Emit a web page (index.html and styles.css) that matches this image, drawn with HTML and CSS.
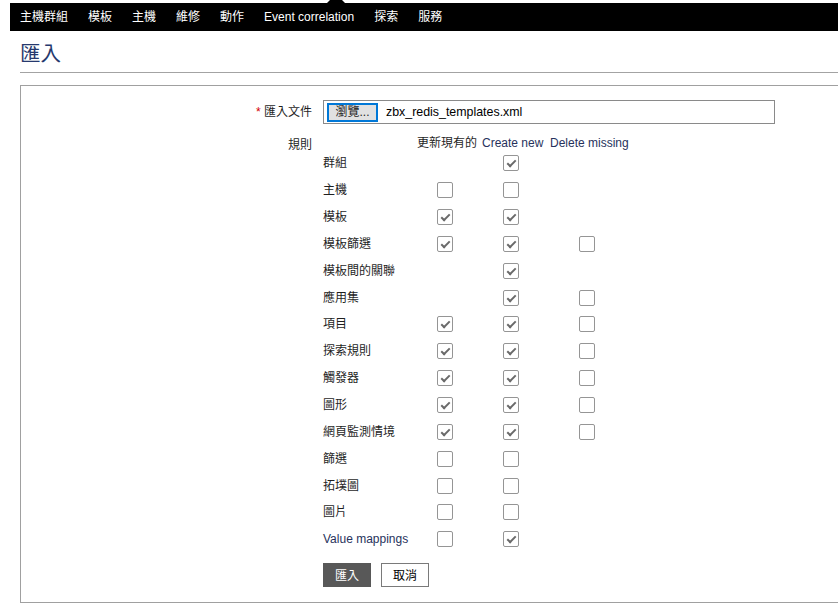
FILE: index.html
```html
<!DOCTYPE html>
<html>
<head>
	<meta charset="UTF-8">
	<title>匯入</title>
	<link rel="stylesheet" href="styles.css">
</head>
<body>
<ul class="top-nav">
	<li>主機群組</li>
	<li>模板</li>
	<li>主機</li>
	<li>維修</li>
	<li>動作</li>
	<li>Event correlation</li>
	<li>探索</li>
	<li>服務</li>
</ul>

<div class="page">
	<h1 class="page-title">匯入</h1>

	<form class="import-form">
		<div class="form-list">
			<label class="form-label"><span class="req">*</span> 匯入文件</label>
			<div class="file-input"><span class="browse">瀏覽...</span><span class="file-name">zbx_redis_templates.xml</span></div>

			<label class="form-label rules-label">規則</label>
			<table class="rules">
				<tr><th></th><th>更新現有的</th><th class="en">Create new</th><th class="en">Delete missing</th></tr>
				<tr><td>群組</td><td></td><td><span class="cb on"></span></td><td></td></tr>
				<tr><td>主機</td><td><span class="cb"></span></td><td><span class="cb"></span></td><td></td></tr>
				<tr><td>模板</td><td><span class="cb on"></span></td><td><span class="cb on"></span></td><td></td></tr>
				<tr><td>模板篩選</td><td><span class="cb on"></span></td><td><span class="cb on"></span></td><td><span class="cb"></span></td></tr>
				<tr><td>模板間的關聯</td><td></td><td><span class="cb on"></span></td><td></td></tr>
				<tr><td>應用集</td><td></td><td><span class="cb on"></span></td><td><span class="cb"></span></td></tr>
				<tr><td>項目</td><td><span class="cb on"></span></td><td><span class="cb on"></span></td><td><span class="cb"></span></td></tr>
				<tr><td>探索規則</td><td><span class="cb on"></span></td><td><span class="cb on"></span></td><td><span class="cb"></span></td></tr>
				<tr><td>觸發器</td><td><span class="cb on"></span></td><td><span class="cb on"></span></td><td><span class="cb"></span></td></tr>
				<tr><td>圖形</td><td><span class="cb on"></span></td><td><span class="cb on"></span></td><td><span class="cb"></span></td></tr>
				<tr><td>網頁監測情境</td><td><span class="cb on"></span></td><td><span class="cb on"></span></td><td><span class="cb"></span></td></tr>
				<tr><td>篩選</td><td><span class="cb"></span></td><td><span class="cb"></span></td><td></td></tr>
				<tr><td>拓墣圖</td><td><span class="cb"></span></td><td><span class="cb"></span></td><td></td></tr>
				<tr><td>圖片</td><td><span class="cb"></span></td><td><span class="cb"></span></td><td></td></tr>
				<tr><td class="en">Value mappings</td><td><span class="cb"></span></td><td><span class="cb on"></span></td><td></td></tr>
			</table>

			<div></div>
			<div class="buttons">
				<button type="button" class="btn-main">匯入</button>
				<button type="button" class="btn-alt">取消</button>
			</div>
		</div>
	</form>
</div>
</body>
</html>
```

FILE: styles.css
```css
*{margin: 0;padding: 0}
ul,li{list-style: none;}
body{font-family: "Liberation Sans", "Noto Sans CJK TC", sans-serif;font-size: 12px;color: #1f1f1f;background: #fff;overflow: hidden;}

/* top menu */
.top-nav{position: relative;display: flex;height: 28px;margin: 3px 0 0 10px;background: #000;}
.top-nav:before{content: "";position: absolute;left: 317px;top: -3px;width: 12px;border-bottom: 3px solid #000;border-left: 3px solid transparent;border-right: 3px solid transparent;}
.top-nav li{padding: 0 10px;line-height: 28px;color: #fff;white-space: nowrap;}

.page{padding-left: 20px;}
.page-title{font: normal 20.5px/24px "Liberation Serif", "Noto Sans CJK TC", serif;color: #26396e;padding: 11px 0 6px;border-bottom: 1px solid #a3a3a3;}

/* form */
.import-form{margin: 12px -10px 0 0;border: 1px solid #a0a0a0;padding: 14px 0 15px;}
.form-list{display: grid;grid-template-columns: 291px 1fr;column-gap: 11px;}
.form-label{text-align: right;line-height: 24px;white-space: nowrap;}
.form-label .req{color: #d40000;}

.file-input{display: flex;align-items: center;box-sizing: border-box;width: 452px;height: 24px;border: 1px solid #8a8a8a;}
.file-input .browse{box-sizing: border-box;width: 51px;height: 19px;margin-left: 3px;line-height: 15px;text-align: center;background: #e1e1e1;border: 2px solid #0078d7;}
.file-input .file-name{margin-left: 8px;font-size: 12.4px;color: #000;}

.rules-label{margin-top: 12px;line-height: 14px;padding-top: 2px;align-self: start;}
.rules{justify-self: start;width: 317px;table-layout: fixed;margin-top: 12px;border-collapse: collapse;border-spacing: 0;}
.rules th{height: 14px;line-height: 14px;padding: 0;font-weight: normal;text-align: left;white-space: nowrap;}
.rules td{height: 26.85px;padding: 0;line-height: 16px;vertical-align: middle;white-space: nowrap;}
.rules th:nth-child(1){width: 94px;}
.rules th:nth-child(2){width: 65px;}
.rules th:nth-child(3){width: 68px;}
.rules th:nth-child(4){width: 90px;}
.rules td:nth-child(2){padding-left: 20px;}
.rules td:nth-child(3){padding-left: 21px;}
.rules td:nth-child(4){padding-left: 29px;}
.en{color: #27325c;}

/* checkbox */
.cb{position: relative;display: inline-block;vertical-align: top;box-sizing: border-box;width: 16px;height: 16px;border: 1px solid #959595;border-radius: 2px;background: #fff;}
.cb.on:after{content: "";position: absolute;left: 5px;top: 2px;width: 3px;height: 7px;border-right: 2px solid #6a6a6a;border-bottom: 2px solid #6a6a6a;transform: rotate(45deg);}

.buttons{display: flex;gap: 10px;margin-top: 10px;}
.buttons button{box-sizing: border-box;width: 48px;height: 24px;font: 12px "Liberation Sans", "Noto Sans CJK TC", sans-serif;cursor: pointer;}
.btn-main{background: #585858;color: #fff;border: 1px solid #585858;}
.btn-alt{background: #fff;color: #000;border: 1px solid #7a7a7a;}
```
